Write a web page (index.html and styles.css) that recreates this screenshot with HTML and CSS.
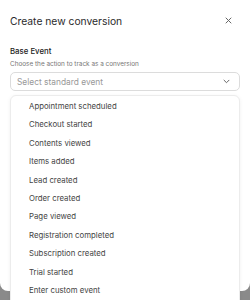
FILE: index.html
```html
<!DOCTYPE html>
<html lang="en">
<head>
    <meta charset="UTF-8">
    <title>Create new conversion</title>
    <meta name="viewport" content="width=device-width, initial-scale=1.0">
    <link rel="stylesheet" href="styles.css">
</head>
<body>
    <div class="modal">
        <div class="modal-header">
            <h1>Create new conversion</h1>
            <button class="close" aria-label="Close">
                <svg width="7" height="7" viewBox="0 0 7 7"><path d="M1 1L6 6M6 1L1 6" stroke="#666" stroke-width="1" stroke-linecap="round"/></svg>
            </button>
        </div>

        <div class="field">
            <label class="field-label">Base Event</label>
            <div class="field-help">Choose the action to track as a conversion</div>
            <div class="select-wrap">
                <div class="select">
                    <span class="placeholder">Select standard event</span>
                    <svg width="7" height="5" viewBox="0 0 7 5"><path d="M1 1.2L3.5 3.7L6 1.2" fill="none" stroke="#666" stroke-width="1" stroke-linecap="round" stroke-linejoin="round"/></svg>
                </div>
                <ul class="menu">
                    <li>Appointment scheduled</li>
                    <li>Checkout started</li>
                    <li>Contents viewed</li>
                    <li>Items added</li>
                    <li>Lead created</li>
                    <li>Order created</li>
                    <li>Page viewed</li>
                    <li>Registration completed</li>
                    <li>Subscription created</li>
                    <li>Trial started</li>
                    <li>Enter custom event</li>
                </ul>
            </div>
        </div>
    </div>
</body>
</html>
```

FILE: styles.css
```css
html, body {
    margin: 0;
    height: 300px;
    overflow: hidden;
}
body {
    font-family: Inter, "Noto Sans", sans-serif;
    background: #8a8a8a;
}
.modal {
    background: white;
    height: 291px;
    padding: 0 10px;
    box-sizing: border-box;
    border-radius: 0 0 8px 8px;
}
.modal-header {
    display: flex;
    align-items: center;
    justify-content: space-between;
    height: 41px;
}
.modal-header h1 {
    margin: 0;
    font-size: 10.3px;
    font-weight: 400;
    color: #2b2b2b;
}
.close {
    border: none;
    background: none;
    padding: 0;
    margin-right: 8px;
    display: flex;
}
.field-label {
    display: block;
    margin-top: 5px;
    font-size: 7.8px;
    font-weight: 500;
    color: #222;
}
.field-help {
    margin-top: 4px;
    font-size: 6.4px;
    color: #777;
}
.select-wrap {
    position: relative;
    margin-top: 4px;
}
.select {
    display: flex;
    align-items: center;
    justify-content: space-between;
    height: 17px;
    padding: 0 9px 0 6px;
    border: 1px solid #dcdcdc;
    border-radius: 5px;
}
.placeholder {
    font-size: 8.4px;
    color: #999;
}
.menu {
    position: absolute;
    top: 23px;
    left: 0;
    right: 0;
    height: 230px;
    margin: 0;
    padding: 1px 0 0;
    list-style: none;
    background: white;
    border: 1px solid #ececec;
    border-radius: 6px;
    box-shadow: 0 1px 4px rgba(0,0,0,0.06);
}
.menu li {
    height: 18.4px;
    line-height: 18.4px;
    padding-left: 18px;
    font-size: 7.8px;
    color: #444;
}
```
